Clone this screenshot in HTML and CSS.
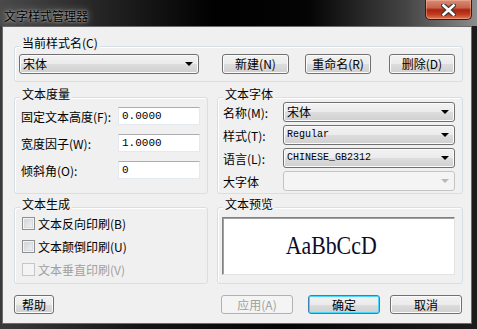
FILE: index.html
```html
<!DOCTYPE html>
<html lang="zh-CN">
<head>
    <meta charset="UTF-8">
    <title>文字样式管理器</title>
    <link rel="stylesheet" href="styles.css">
</head>
<body>
<div class="window">
    <div class="titlebar">
        <span class="title">文字样式管理器</span>
        <span class="close-btn">
            <svg width="15" height="12" viewBox="0 0 15 12">
                <path d="M2.5 1.5 L12.5 10.5 M12.5 1.5 L2.5 10.5" stroke="#3a3a3a" stroke-width="5" stroke-linecap="square"/>
                <path d="M2.5 1.5 L12.5 10.5 M12.5 1.5 L2.5 10.5" stroke="#fff" stroke-width="2.6" stroke-linecap="square"/>
            </svg>
        </span>
    </div>
    <div class="client">
        <div class="group group-current">
            <div class="group-title">当前样式名(C)</div>
            <div class="group-body current-body">
                <div class="combo combo-current"><span>宋体</span><i class="arrow"></i></div>
                <button class="btn btn-new">新建(N)</button>
                <button class="btn btn-rename">重命名(R)</button>
                <button class="btn btn-delete">删除(D)</button>
            </div>
        </div>

        <div class="group-row row-mid">
            <div class="group group-metric">
                <div class="group-title">文本度量</div>
                <div class="group-body metric-body">
                    <div class="field-row">
                        <span class="label">固定文本高度(F):</span>
                        <div class="textbox">0.0000</div>
                    </div>
                    <div class="field-row">
                        <span class="label">宽度因子(W):</span>
                        <div class="textbox">1.0000</div>
                    </div>
                    <div class="field-row">
                        <span class="label">倾斜角(O):</span>
                        <div class="textbox">0</div>
                    </div>
                </div>
            </div>
            <div class="group group-font">
                <div class="group-title">文本字体</div>
                <div class="group-body font-body">
                    <div class="field-row">
                        <span class="label">名称(M):</span>
                        <div class="combo combo-font"><span>宋体</span><i class="arrow"></i></div>
                    </div>
                    <div class="field-row">
                        <span class="label">样式(T):</span>
                        <div class="combo combo-font"><span class="latin">Regular</span><i class="arrow"></i></div>
                    </div>
                    <div class="field-row">
                        <span class="label">语言(L):</span>
                        <div class="combo combo-font"><span class="latin">CHINESE_GB2312</span><i class="arrow"></i></div>
                    </div>
                    <div class="field-row">
                        <span class="label">大字体</span>
                        <div class="combo combo-font disabled"><span></span><i class="arrow"></i></div>
                    </div>
                </div>
            </div>
        </div>

        <div class="group-row row-bottom">
            <div class="group group-gen">
                <div class="group-title">文本生成</div>
                <div class="group-body gen-body">
                    <div class="check-row"><i class="checkbox"></i><span>文本反向印刷(B)</span></div>
                    <div class="check-row"><i class="checkbox"></i><span>文本颠倒印刷(U)</span></div>
                    <div class="check-row disabled"><i class="checkbox"></i><span>文本垂直印刷(V)</span></div>
                </div>
            </div>
            <div class="group group-preview">
                <div class="group-title">文本预览</div>
                <div class="group-body preview-body">
                    <div class="preview"><span class="preview-text">AaBbCcD</span></div>
                </div>
            </div>
        </div>

        <div class="footer">
            <button class="btn btn-help">帮助</button>
            <button class="btn btn-apply" disabled>应用(A)</button>
            <button class="btn btn-ok">确定</button>
            <button class="btn btn-cancel">取消</button>
        </div>
    </div>
</div>
</body>
</html>
```

FILE: styles.css
```css
* {
    padding: 0;
    margin: 0;
    box-sizing: border-box;
}
body {
    width: 477px;
    height: 329px;
    overflow: hidden;
    background: #000;
    font-family: "Noto Sans CJK SC", sans-serif;
    font-size: 12px;
    color: #000;
}
.window {
    width: 477px;
    height: 329px;
    display: flex;
    flex-direction: column;
    background: linear-gradient(90deg, #3a3a3a 0%, #141414 30%, #050505 60%, #1c1c1c 100%);
}
.titlebar {
    height: 26px;
    display: flex;
    align-items: flex-start;
    background: linear-gradient(90deg, #4a4a4a 0%, #262626 20%, #000 45%, #050505 65%, #444 85%, #8c8c8c 100%);
}
.title {
    margin: 9px 0 0 4px;
    line-height: 14px;
    color: #000;
    text-shadow: 0 0 3px rgba(220, 220, 220, 0.9), 0 0 8px rgba(190, 190, 190, 0.8);
}
.close-btn {
    margin-left: auto;
    margin-right: 5px;
    width: 47px;
    height: 20px;
    display: flex;
    align-items: center;
    justify-content: center;
    border: 1px solid #3b1a12;
    border-top: 0;
    border-radius: 0 0 5px 5px;
    background: linear-gradient(#d98d78 0%, #c9654a 40%, #a8260e 52%, #c03a1e 75%, #dc7a58 100%);
    box-shadow: inset 0 0 0 1px rgba(255, 200, 180, 0.4);
}
.client {
    flex: 1;
    margin: 0 5px 5px 2px;
    border: 1px solid #6b6b6b;
    background: #f0f0f0;
    padding: 0 8px 0 11px;
}

/* group boxes */
.group {
    border: 1px solid #d5dfe5;
    border-radius: 3px;
    box-shadow: inset 1px 1px 0 #fff;
}
.group-title {
    width: fit-content;
    height: 14px;
    line-height: 14px;
    margin: -11px 0 -3px 5px;
    padding: 0 2px;
    background: #f0f0f0;
    white-space: nowrap;
}
.group-current {
    margin-top: 19px;
}
.current-body {
    display: flex;
    padding: 7px 7px 7px 4px;
}
.group-row {
    display: flex;
    gap: 9px;
}
.row-mid {
    margin-top: 15px;
}
.row-bottom {
    margin-top: 13px;
}
.group-metric,
.group-gen {
    width: 194px;
}
.group-font,
.group-preview {
    flex: 1;
}
.metric-body {
    display: flex;
    flex-direction: column;
    gap: 9px;
    padding: 9px 7px 14px 6px;
}
.font-body {
    display: flex;
    flex-direction: column;
    gap: 3px;
    padding: 4px 7px 2px 5px;
}
.field-row {
    display: flex;
    align-items: center;
    justify-content: space-between;
    white-space: nowrap;
}
.metric-body .field-row {
    height: 18px;
}
.font-body .field-row {
    height: 20px;
}
.textbox {
    width: 82px;
    height: 18px;
    line-height: 16px;
    padding-left: 3px;
    background: #fff;
    border: 1px solid #e3e9ef;
    border-top-color: #abadb3;
    font-family: "Liberation Mono", monospace;
    font-size: 11px;
}

/* combo boxes */
.combo {
    height: 20px;
    display: flex;
    align-items: center;
    padding: 0 5px 0 3px;
    border: 1px solid #707070;
    border-radius: 3px;
    background: linear-gradient(#f2f2f2 0%, #ebebeb 50%, #dddddd 51%, #cfcfcf 100%);
    box-shadow: inset 0 0 0 1px #fbfbfb;
    line-height: 16px;
}
.combo span {
    flex: 1;
}
.combo .latin {
    font-family: "Liberation Mono", monospace;
    font-size: 10px;
}
.combo-current {
    width: 180px;
}
.combo-font {
    width: 172px;
}
.arrow {
    width: 0;
    height: 0;
    border-left: 4px solid transparent;
    border-right: 4px solid transparent;
    border-top: 4px solid #000;
}
.combo.disabled {
    border-color: #c2c5c8;
    background: #f4f4f4;
    box-shadow: none;
}
.combo.disabled .arrow {
    border-top-color: #b8b8b8;
}

/* checkboxes */
.gen-body {
    display: flex;
    flex-direction: column;
    gap: 10px;
    padding: 9px 7px 7px 7px;
}
.check-row {
    height: 13px;
    display: flex;
    align-items: center;
    gap: 3px;
    white-space: nowrap;
}
.checkbox {
    width: 13px;
    height: 13px;
    border: 1px solid #8e8f8f;
    background: linear-gradient(135deg, #cbcfd5 0%, #f6f6f6 100%);
    box-shadow: inset 0 0 0 1px #f4f4f4, inset 0 0 0 2px #d9dcdf;
}
.check-row.disabled {
    color: #a0a0a0;
}
.check-row.disabled .checkbox {
    border-color: #c6c6c6;
    background: #f4f4f4;
    box-shadow: none;
}

/* preview */
.preview-body {
    padding: 9px 7px 8px 4px;
}
.preview {
    height: 58px;
    display: flex;
    align-items: center;
    justify-content: center;
    padding-right: 14px;
    background: #fff;
    border: 1px solid #e3e3e3;
    border-top-color: #828282;
    border-left-color: #828282;
    box-shadow: inset 1px 1px 0 #a0a0a0;
}
.preview-text {
    display: inline-block;
    font-family: "Liberation Serif", serif;
    font-size: 26px;
    color: #0c0c2c;
    transform: scaleX(0.84);
}

/* buttons */
.btn {
    height: 20px;
    font-family: "Noto Sans CJK SC", sans-serif;
    font-size: 12px;
    line-height: 16px;
    color: #000;
    border: 1px solid #707070;
    border-radius: 3px;
    background: linear-gradient(#f2f2f2 0%, #ebebeb 50%, #dddddd 51%, #cfcfcf 100%);
    box-shadow: inset 0 0 0 1px #fbfbfb;
    white-space: nowrap;
}
.btn-new {
    width: 67px;
    margin-left: 23px;
}
.btn-rename {
    width: 66px;
    margin-left: 16px;
}
.btn-delete {
    width: 66px;
    margin-left: 18px;
}
.footer {
    display: flex;
    margin-top: 11px;
}
.footer .btn {
    height: 19px;
    width: 72px;
}
.footer .btn-help {
    width: 40px;
}
.btn-apply {
    margin-left: 167px;
    color: #a0a0a0;
    border-color: #adb2b5;
    background: #f4f4f4;
    box-shadow: none;
}
.btn-ok {
    margin-left: 15px;
    border-color: #3c7fb1;
    box-shadow: inset 0 0 0 1px #48d8fb;
}
.btn-cancel {
    margin-left: 10px;
}
```
